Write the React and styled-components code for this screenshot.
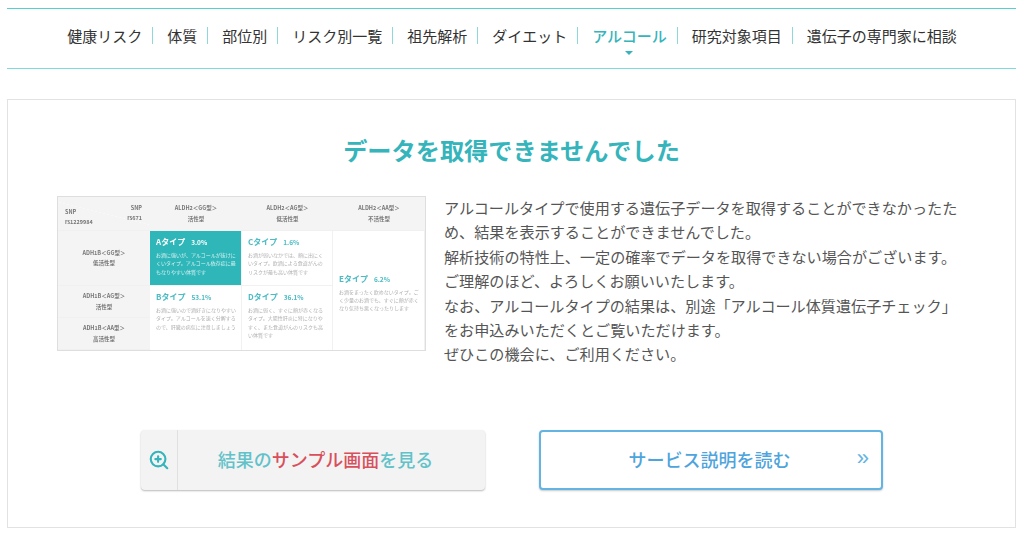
import React from 'react';
import styled, { createGlobalStyle } from 'styled-components';
import { ZoomIn } from 'lucide-react';

const GlobalStyle = createGlobalStyle`
  html, body {
    margin: 0;
    padding: 0;
    background: #fff;
    font-family: "Noto Sans CJK JP", "Noto Sans", sans-serif;
  }
`;

const Page = styled.div`
  width: 1009px;
  padding: 8px 8px 0 7px;
`;

const Nav = styled.nav`
  height: 53px;
  display: flex;
  justify-content: center;
  align-items: center;
  border-top: 1px solid #55cfd2;
  border-bottom: 1px solid #7fdadc;
  padding: 0 3px 6px 0;
`;

const NavItem = styled.a`
  position: relative;
  font-size: 15px;
  line-height: 17px;
  color: ${(p) => (p.$active ? '#35b4bc' : '#333')};
  font-weight: ${(p) => (p.$active ? 500 : 400)};
  padding: 0 10px 0 14px;
  border-right: ${(p) => (p.$last ? 'none' : '1px solid #8ed8dc')};

  ${(p) =>
    p.$active &&
    `&::after {
      content: '';
      position: absolute;
      left: 50%;
      bottom: -11px;
      margin-left: -2px;
      border-left: 4px solid transparent;
      border-right: 4px solid transparent;
      border-top: 4px solid #35b4bc;
    }`}
`;

const Panel = styled.section`
  margin-top: 30px;
  height: 429px;
  box-sizing: border-box;
  border: 1px solid #e2e2e2;
  padding: 30px 49px 0;
`;

const Title = styled.h2`
  margin: 0;
  text-align: center;
  font-size: 24.2px;
  line-height: 40px;
  font-weight: 700;
  color: #35b5bb;
`;

const Media = styled.div`
  display: flex;
  gap: 18px;
  margin-top: 26px;
`;

const Thumb = styled.div`
  width: 369px;
  height: 155px;
  flex: none;
  box-sizing: border-box;
  border: 1px solid #dedede;
  display: grid;
  grid-template-columns: 92px 92px 91px 92px;
  grid-template-rows: 34px 55px 32px 32px;
  font-size: 5px;
  line-height: 8.3px;
  color: #888;
  filter: blur(0.35px);
`;

const HeadCell = styled.div`
  background: #f4f4f4;
  display: flex;
  flex-direction: column;
  align-items: center;
  justify-content: center;
  gap: 2px;
  font-size: 5.5px;
  font-weight: 700;
  color: #777;
  text-align: center;
  border-bottom: 1px solid #f0f0f0;
`;

const Corner = styled.div`
  background: linear-gradient(14deg, #f4f4f4 49.6%, #fbfbfb 50%, #f4f4f4 50.6%);
  display: flex;
  justify-content: space-between;
  padding: 6px 8px 0 7px;
  font-size: 5.5px;
  line-height: 10px;
  font-weight: 700;
  color: #777;
  border-bottom: 1px solid #f0f0f0;
`;

const CornerCol = styled.div`
  margin-top: ${(p) => p.$offset || 0}px;
  text-align: ${(p) => p.$align || 'left'};
`;

const Cell = styled.div`
  box-sizing: border-box;
  padding: ${(p) => p.$pad || '5px 5px 0 6px'};
  background: ${(p) => (p.$filled ? '#2fb6b9' : '#fff')};
  color: ${(p) => (p.$filled ? '#d6f1f1' : '#b0b0b0')};
  border-right: 1px solid #f1f1f1;
  border-bottom: ${(p) => (p.$noBottom ? 'none' : '1px solid #f1f1f1')};
  grid-column: ${(p) => p.$col};
  grid-row: ${(p) => p.$row};
  display: flex;
  flex-direction: column;
  justify-content: ${(p) => (p.$center ? 'center' : 'flex-start')};
`;

const TypeName = styled.div`
  font-size: 8px;
  line-height: 12px;
  font-weight: 700;
  margin-bottom: 3px;
  color: ${(p) => (p.$filled ? '#fff' : '#4bbcc4')};

  span {
    font-size: 6.5px;
    margin-left: 6px;
  }
`;

const Copy = styled.div`
  color: #555;
  font-size: 15.12px;
  line-height: 24.4px;
  width: 520px;
  margin-top: -1px;
`;

const Actions = styled.div`
  display: flex;
  gap: 54px;
  margin: 64px 0 0 84px;
`;

const SampleButton = styled.a`
  width: 344px;
  height: 60px;
  box-sizing: border-box;
  display: flex;
  background: #f3f3f3;
  border-radius: 4px;
  box-shadow: 0 1px 2px rgba(0, 0, 0, 0.28);
`;

const IconCell = styled.span`
  width: 36px;
  flex: none;
  display: flex;
  align-items: center;
  justify-content: center;
  color: #35b5bb;
  border-right: 1px solid #e0e0e0;
`;

const SampleLabel = styled.span`
  flex: 1;
  text-align: center;
  font-size: 18px;
  line-height: 58px;
  font-weight: 500;
  color: #62c2c9;
  padding-right: 12px;

  em {
    font-style: normal;
    color: #d8505c;
  }
`;

const ServiceButton = styled.a`
  position: relative;
  width: 344px;
  height: 60px;
  box-sizing: border-box;
  display: flex;
  align-items: center;
  justify-content: center;
  background: #fff;
  border: 2px solid #63b4e2;
  border-radius: 4px;
  box-shadow: 0 1px 2px rgba(0, 0, 0, 0.22);
  font-size: 18px;
  font-weight: 500;
  color: #4ea4dc;
  padding: 0 3px 2px 0;
`;

const Arrows = styled.span`
  position: absolute;
  right: 12px;
  top: 11px;
  font-family: "Liberation Sans", sans-serif;
  font-size: 22px;
  line-height: 30px;
  color: #63b4e2;
`;

const navItems = ['健康リスク', '体質', '部位別', 'リスク別一覧', '祖先解析', 'ダイエット', 'アルコール', '研究対象項目', '遺伝子の専門家に相談'];

const copyLines = [
  'アルコールタイプで使用する遺伝子データを取得することができなかったため、結果を表示することができませんでした。',
  '解析技術の特性上、一定の確率でデータを取得できない場合がございます。',
  'ご理解のほど、よろしくお願いいたします。',
  'なお、アルコールタイプの結果は、別途「アルコール体質遺伝子チェック」をお申込みいただくとご覧いただけます。',
  'ぜひこの機会に、ご利用ください。',
];

const Head = ({ title, sub }) => (
  <HeadCell>
    <div>{title}</div>
    <div>{sub}</div>
  </HeadCell>
);

export default function App() {
  return (
    <>
      <GlobalStyle />
      <Page>
        <Nav>
          {navItems.map((item, i) => (
            <NavItem key={item} $active={item === 'アルコール'} $last={i === navItems.length - 1}>
              {item}
            </NavItem>
          ))}
        </Nav>
        <Panel>
          <Title>データを取得できませんでした</Title>
          <Media>
            <Thumb>
              <Corner>
                <CornerCol $offset={4}>SNP<br />rs1229984</CornerCol>
                <CornerCol $align="right">SNP<br />rs671</CornerCol>
              </Corner>
              <Head title="ALDH2＜GG型＞" sub="活性型" />
              <Head title="ALDH2＜AG型＞" sub="低活性型" />
              <Head title="ALDH2＜AA型＞" sub="不活性型" />
              <Head title="ADH1B＜GG型＞" sub="低活性型" />
              <Cell $filled $col="2" $row="2">
                <TypeName $filled>Aタイプ<span>3.0%</span></TypeName>
                お酒に強いが、アルコールが抜けにくいタイプ。アルコール依存症に最もなりやすい体質です
              </Cell>
              <Cell $col="3" $row="2">
                <TypeName>Cタイプ<span>1.6%</span></TypeName>
                お酒が弱いなかでは、顔に出にくいタイプ。飲酒による食道がんのリスクが最も高い体質です
              </Cell>
              <Cell $col="4" $row="2 / 5" $center $noBottom $pad="4px 5px 0 6px">
                <TypeName>Eタイプ<span>6.2%</span></TypeName>
                お酒をまったく飲めないタイプ。ごく少量のお酒でも、すぐに顔が赤くなり気持ち悪くなったりします
              </Cell>
              <Head title="ADH1B＜AG型＞" sub="活性型" />
              <Cell $col="2" $row="3 / 5" $noBottom>
                <TypeName>Bタイプ<span>53.1%</span></TypeName>
                お酒に強いので酒好きになりやすいタイプ。アルコールを速く分解するので、肝臓の病気に注意しましょう
              </Cell>
              <Cell $col="3" $row="3 / 5" $noBottom>
                <TypeName>Dタイプ<span>36.1%</span></TypeName>
                お酒に弱く、すぐに顔が赤くなるタイプ。大腸性肝炎に特になりやすく、また食道がんのリスクも高い体質です
              </Cell>
              <Head title="ADH1B＜AA型＞" sub="高活性型" />
            </Thumb>
            <Copy>
              {copyLines.map((line) => (
                <div key={line}>{line}</div>
              ))}
            </Copy>
          </Media>
          <Actions>
            <SampleButton>
              <IconCell>
                <ZoomIn size={22} strokeWidth={2.3} />
              </IconCell>
              <SampleLabel>
                結果の<em>サンプル画面</em>を見る
              </SampleLabel>
            </SampleButton>
            <ServiceButton>
              サービス説明を読む
              <Arrows>»</Arrows>
            </ServiceButton>
          </Actions>
        </Panel>
      </Page>
    </>
  );
}
